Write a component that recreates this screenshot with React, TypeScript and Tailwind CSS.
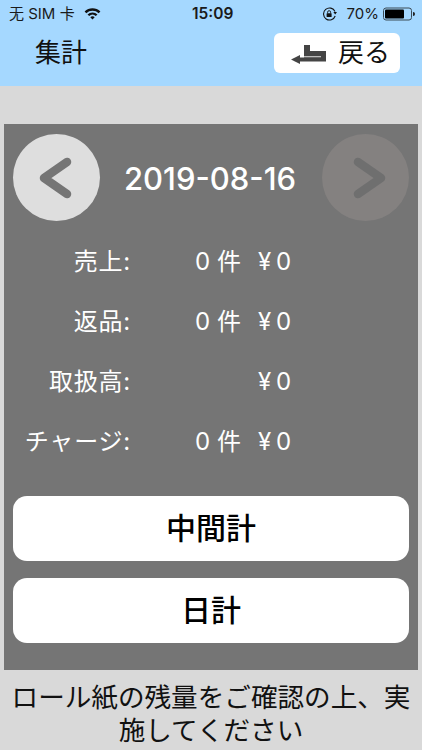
import React from "react";

const FONT = "font-['Inter','Noto_Sans_CJK_JP',sans-serif]";

const rows = [
  { label: "売上:", count: "0 件", amount: "¥ 0" },
  { label: "返品:", count: "0 件", amount: "¥ 0" },
  { label: "取扱高:", count: "", amount: "¥ 0" },
  { label: "チャージ:", count: "0 件", amount: "¥ 0" },
];

function StatusBar() {
  return (
    <div className="relative flex h-[28px] items-center justify-between pl-[9px] pr-[7px] text-[15px] text-[#1a1a1a]">
      <div className="flex items-center gap-[9px]">
        <span>无 SIM 卡</span>
        <svg width="17" height="13" viewBox="0 0 17 13" className="mt-[-2px]">
          <path d="M0.6 4.4 A11.5 11.5 0 0 1 16.4 4.4 L14.7 6.2 A9 9 0 0 0 2.3 6.2 Z" fill="#111" />
          <path d="M3.5 7.4 A7.3 7.3 0 0 1 13.5 7.4 L11.8 9.1 A4.9 4.9 0 0 0 5.2 9.1 Z" fill="#111" />
          <path d="M6.3 10.2 A3.2 3.2 0 0 1 10.7 10.2 L8.5 12.6 Z" fill="#111" />
        </svg>
      </div>
      <span className="absolute left-[192px] top-[4px] text-[15.5px] font-semibold leading-[20px]">15:09</span>
      <div className="flex items-center gap-[4px]">
        <svg width="16" height="14" viewBox="0 0 16 14" className="mr-[5px]">
          <path d="M13 4.5 A6 6 0 1 0 13.2 9" fill="none" stroke="#111" strokeWidth="1.1" />
          <path d="M11.4 5 L15 5 L13.2 7.4 Z" fill="#111" />
          <rect x="4.6" y="6.2" width="5" height="3.8" rx="0.5" fill="#111" />
          <path d="M5.6 6.4 V5.2 a1.5 1.5 0 0 1 3 0 V6.4" fill="none" stroke="#111" strokeWidth="0.9" />
        </svg>
        <span>70%</span>
        <svg width="32" height="14" viewBox="0 0 32 14">
          <rect x="0.5" y="1" width="28" height="12" rx="2.5" fill="none" stroke="#3a4a55" strokeWidth="1" />
          <rect x="2" y="2.5" width="19" height="9" rx="1" fill="#000" />
          <path d="M30 5 a2 2 0 0 1 0 4 Z" fill="#222" />
        </svg>
      </div>
    </div>
  );
}

function Header() {
  return (
    <div className="flex h-[58px] items-start justify-between bg-[#a5d8ff]">
      <span className="ml-[35px] mt-[7px] text-[26px] leading-[36px] text-[#111]">集計</span>
      <button className="mr-[22px] mt-[5px] flex h-[40px] w-[126px] items-center rounded-[6px] bg-white pl-[17px]">
        <svg width="35" height="20" viewBox="0 0 35 20" className="mt-[3px]">
          <path d="M0 14.5 L9 10 V12.5 H13 V0 H19 V6 H35 V16.5 H9 V19 Z" fill="#444" />
          <rect x="13" y="11" width="17" height="1.3" fill="#bbb" />
        </svg>
        <span className="ml-[12px] text-[26px] leading-[36px] text-[#111]">戻る</span>
      </button>
    </div>
  );
}

function NavCircle({ dir, dim }: { dir: "left" | "right"; dim?: boolean }) {
  return (
    <div
      className={`flex h-[87px] w-[87px] shrink-0 items-center justify-center rounded-full ${
        dim ? "bg-[#848180]" : "bg-[#dedede]"
      }`}
    >
      <svg width="40" height="44" viewBox="0 0 40 44">
        <path
          d={dir === "left" ? "M30 6 L7 22 L30 38" : "M12 6 L35 22 L12 38"}
          fill="none"
          stroke={dim ? "#6f6f6f" : "#757575"}
          strokeWidth="8.5"
          strokeLinecap="round"
          strokeLinejoin="round"
        />
      </svg>
    </div>
  );
}

function Row({ label, count, amount }: { label: string; count: string; amount: string }) {
  return (
    <div className="flex h-[60px] items-center pt-[1px] text-[24px] text-white">
      <span className="w-[118px] whitespace-nowrap text-right tracking-[0.8px]">{label}</span>
      <span className="ml-[64px] w-[62px] whitespace-nowrap">{count}</span>
      <span className="ml-[1px] whitespace-nowrap [word-spacing:-2px]">{amount}</span>
    </div>
  );
}

export default function App() {
  return (
    <div className={`flex h-[750px] w-[422px] flex-col overflow-hidden bg-[#d9d9d9] ${FONT}`}>
      <div className="bg-[#a5d8ff]">
        <StatusBar />
        <Header />
      </div>
      <main className="mx-[4px] mt-[38px] flex h-[546px] flex-col bg-[#757575] px-[9px] pt-[10px]">
        <div className="flex items-center justify-between">
          <NavCircle dir="left" />
          <span className="mr-[2px] mt-[3px] text-[31px] font-medium text-white">2019-08-16</span>
          <NavCircle dir="right" dim />
        </div>
        <div className="mt-[10px]">
          {rows.map((r) => (
            <Row key={r.label} {...r} />
          ))}
        </div>
        <div className="mt-[25px] flex flex-col gap-[17px]">
          <button className="h-[65px] rounded-[14px] bg-white text-[30px] font-medium text-black">中間計</button>
          <button className="h-[65px] rounded-[14px] bg-white text-[30px] font-medium text-black">日計</button>
        </div>
      </main>
      <p className="mt-[11px] px-[4px] text-center text-[26.6px] leading-[33px] text-[#111]">
        ロール紙の残量をご確認の上、実施してください
      </p>
    </div>
  );
}
